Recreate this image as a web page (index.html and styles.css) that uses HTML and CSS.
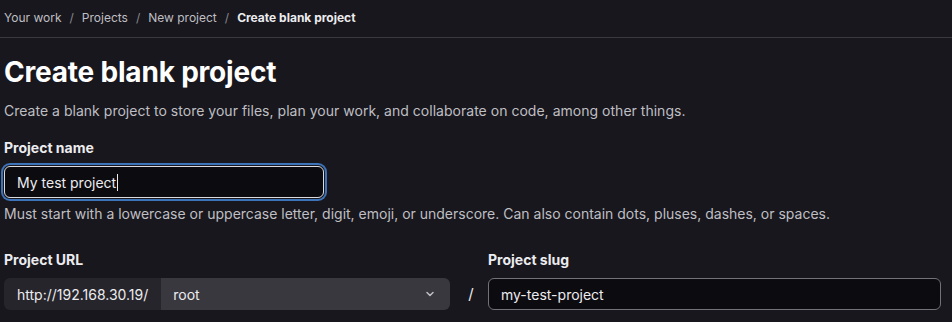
FILE: index.html
```html
<!DOCTYPE html>
<html lang="en">
<head>
<meta charset="utf-8">
<title>Create blank project</title>
<link rel="stylesheet" href="styles.css">
</head>
<body>
<nav class="breadcrumbs">
  <a href="#">Your work</a><span class="sep">/</span>
  <a href="#">Projects</a><span class="sep">/</span>
  <a href="#">New project</a><span class="sep">/</span>
  <span class="current">Create blank project</span>
</nav>
<main class="page">
  <h1 class="title">Create blank project</h1>
  <p class="lead">Create a blank project to store your files, plan your work, and collaborate on code, among other things.</p>

  <div class="field">
    <label class="label">Project name</label>
    <div class="input input-lg focused"><span class="value">My test project</span><span class="caret"></span></div>
    <p class="help">Must start with a lowercase or uppercase letter, digit, emoji, or underscore. Can also contain dots, pluses, dashes, or spaces.</p>
  </div>

  <div class="url-row">
    <div class="col">
      <label class="label">Project URL</label>
      <div class="group">
        <span class="prefix">http://192.168.30.19/</span>
        <span class="select">root
          <svg class="chev" width="16" height="16" viewBox="0 0 16 16"><path d="M5 6.5 8 9.5 11 6.5" fill="none" stroke="currentColor" stroke-width="1.5" stroke-linecap="round" stroke-linejoin="round"/></svg>
        </span>
      </div>
    </div>
    <div class="slash">/</div>
    <div class="col">
      <label class="label">Project slug</label>
      <div class="input slug"><span class="value">my-test-project</span></div>
    </div>
  </div>
</main>
</body>
</html>
```

FILE: styles.css
```css
* { box-sizing: border-box; }
html, body {
  margin: 0;
  background: #18171d;
  color: #ececef;
  font-family: Inter, "Noto Sans", sans-serif;
  font-size: 14px;
}
.breadcrumbs {
  height: 38px;
  padding: 0 4px;
  display: flex;
  align-items: center;
  font-size: 12px;
  color: #bfbfc3;
  border-bottom: 1px solid #3a393f;
  padding-bottom: 2px;
}
.breadcrumbs a { color: #bfbfc3; text-decoration: none; }
.breadcrumbs .sep { margin: 0 8px; color: #89888d; }
.breadcrumbs .current { font-weight: 700; color: #ececef; }

.page { padding: 0 11px 0 4px; }
.title {
  margin: 17px 0 0;
  font-size: 28px;
  line-height: 35px;
  font-weight: 700;
  color: #fff;
  letter-spacing: -0.2px;
}
.lead {
  margin: 11px 0 0;
  line-height: 20px;
  color: #bfbfc3;
  letter-spacing: 0.02px;
}
.field { margin-top: 17px; }
.label {
  display: block;
  font-weight: 700;
  line-height: 20px;
  margin-bottom: 8px;
  color: #ececef;
}
.input {
  height: 32px;
  border-radius: 6px;
  background: #0c0b10;
  border: 1px solid #737278;
  display: flex;
  align-items: center;
  padding: 0 12px;
  color: #ececef;
}
.input-lg { width: 320px; }
.focused {
  border-color: #dcdcde;
  box-shadow: 0 0 0 1px #18171d, 0 0 0 3px #3d73b8;
}
.caret {
  display: inline-block;
  width: 1px;
  height: 17px;
  background: #ececef;
  margin-left: 1px;
}
.help {
  margin: 6px 0 0;
  line-height: 20px;
  color: #bfbfc3;
}
.url-row {
  margin-top: 26px;
  display: grid;
  grid-template-columns: 446px 38px 1fr;
}
.group {
  display: flex;
  height: 32px;
  border-radius: 6px;
  overflow: hidden;
}
.prefix {
  background: #26252b;
  display: flex;
  align-items: center;
  padding: 0 13px;
  white-space: nowrap;
  color: #ececef;
}
.select {
  flex: 1;
  background: #3a383f;
  display: flex;
  align-items: center;
  justify-content: space-between;
  padding: 0 12px;
  color: #ececef;
}
.chev { color: #bfbfc3; }
.slash {
  display: flex;
  align-items: flex-end;
  justify-content: center;
  height: 100%;
  padding: 0 0 7px 4px;
  font-size: 15px;
  color: #ececef;
}
.slug { width: 100%; }
```
